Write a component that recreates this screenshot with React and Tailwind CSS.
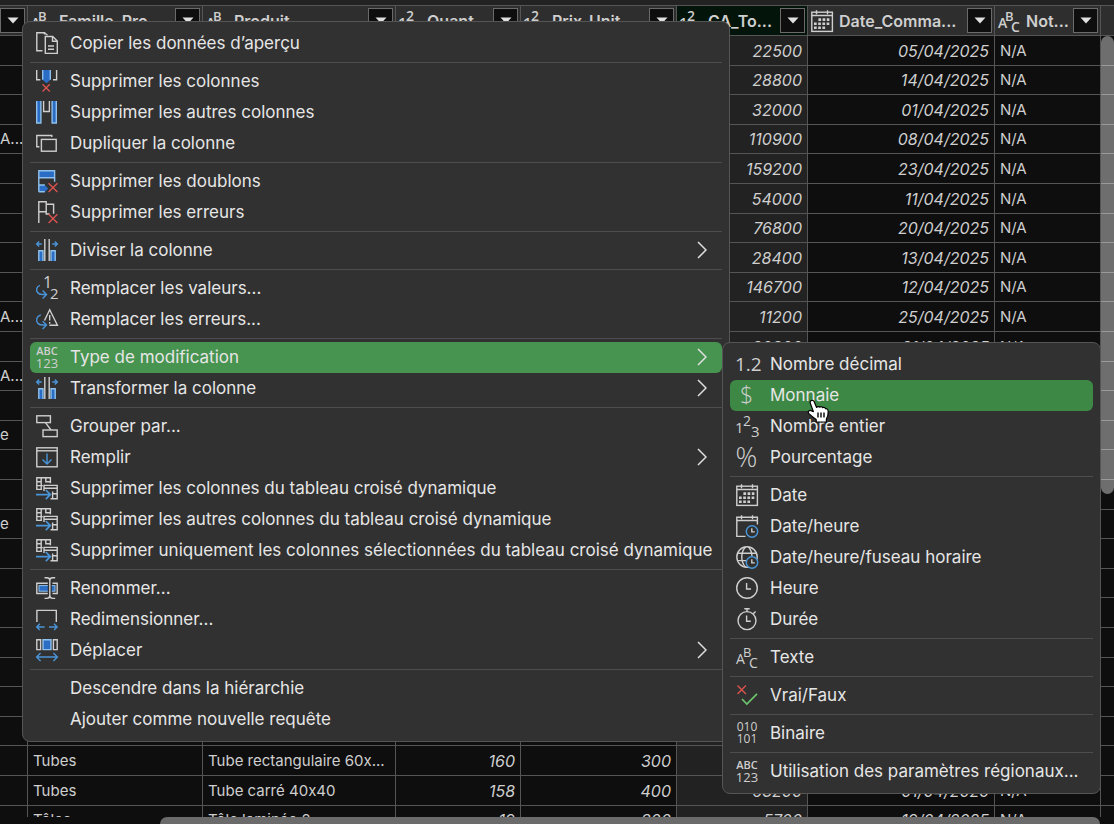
import React from "react";

const COLUMNS = [
  { key: "ref", label: "", width: "w-[28px]" },
  { key: "famille", label: "Famille_Pro...", type: "abc", width: "w-[175px]" },
  { key: "produit", label: "Produit", type: "abc", width: "w-[193px]" },
  { key: "quantite", label: "Quant...", type: "int", width: "w-[125px]", number: true },
  { key: "prix", label: "Prix_Unit...", type: "int", width: "w-[156px]", number: true },
  { key: "total", label: "CA_To...", type: "int", width: "w-[131px]", number: true, selected: true },
  { key: "date", label: "Date_Comma...", type: "date", width: "w-[187px]", number: true },
  { key: "note", label: "Not...", type: "abc", width: "w-[106px]" },
];

const ROWS = [
  { total: "22500", date: "05/04/2025", note: "N/A" },
  { total: "28800", date: "14/04/2025", note: "N/A" },
  { total: "32000", date: "01/04/2025", note: "N/A" },
  { ref: "A...", total: "110900", date: "08/04/2025", note: "N/A" },
  { total: "159200", date: "23/04/2025", note: "N/A" },
  { total: "54000", date: "11/04/2025", note: "N/A" },
  { total: "76800", date: "20/04/2025", note: "N/A" },
  { total: "28400", date: "13/04/2025", note: "N/A" },
  { total: "146700", date: "12/04/2025", note: "N/A" },
  { ref: "A...", total: "11200", date: "25/04/2025", note: "N/A" },
  { total: "20800", date: "21/04/2025", note: "N/A" },
  { ref: "A..." },
  {},
  { ref: "e" },
  {},
  {},
  { ref: "e" },
  {},
  {},
  {},
  {},
  {},
  {},
  {},
  { famille: "Tubes", produit: "Tube rectangulaire 60x...", quantite: "160", prix: "300" },
  { famille: "Tubes", produit: "Tube carré 40x40", quantite: "158", prix: "400", total: "63200", date: "01/04/2025", note: "N/A" },
  { famille: "Tôles", produit: "Tôle laminée 2", quantite: "19", prix: "300", total: "5700", date: "19/04/2025", note: "N/A" },
];

const MENU = [
  [{ label: "Copier les données d’aperçu", icon: "copy" }],
  [
    { label: "Supprimer les colonnes", icon: "removeColumns" },
    { label: "Supprimer les autres colonnes", icon: "removeOthers" },
    { label: "Dupliquer la colonne", icon: "duplicate" },
  ],
  [
    { label: "Supprimer les doublons", icon: "removeDuplicates" },
    { label: "Supprimer les erreurs", icon: "removeErrors" },
  ],
  [{ label: "Diviser la colonne", icon: "split", submenu: true }],
  [
    { label: "Remplacer les valeurs...", icon: "replaceValues" },
    { label: "Remplacer les erreurs...", icon: "replaceErrors" },
  ],
  [
    { label: "Type de modification", icon: "anyType", submenu: true, active: true },
    { label: "Transformer la colonne", icon: "split", submenu: true },
  ],
  [
    { label: "Grouper par...", icon: "group" },
    { label: "Remplir", icon: "fill", submenu: true },
    { label: "Supprimer les colonnes du tableau croisé dynamique", icon: "unpivot" },
    { label: "Supprimer les autres colonnes du tableau croisé dynamique", icon: "unpivot" },
    { label: "Supprimer uniquement les colonnes sélectionnées du tableau croisé dynamique", icon: "unpivot" },
  ],
  [
    { label: "Renommer...", icon: "rename" },
    { label: "Redimensionner...", icon: "resize" },
    { label: "Déplacer", icon: "move", submenu: true },
  ],
  [{ label: "Descendre dans la hiérarchie" }, { label: "Ajouter comme nouvelle requête" }],
];

const TYPE_MENU = [
  [
    { label: "Nombre décimal", icon: "decimal" },
    { label: "Monnaie", icon: "currency", active: true },
    { label: "Nombre entier", icon: "int" },
    { label: "Pourcentage", icon: "percent" },
  ],
  [
    { label: "Date", icon: "date" },
    { label: "Date/heure", icon: "dateTime" },
    { label: "Date/heure/fuseau horaire", icon: "dateTimeZone" },
    { label: "Heure", icon: "time" },
    { label: "Durée", icon: "duration" },
  ],
  [{ label: "Texte", icon: "abc" }],
  [{ label: "Vrai/Faux", icon: "boolean" }],
  [{ label: "Binaire", icon: "binary" }],
  [{ label: "Utilisation des paramètres régionaux...", icon: "anyType" }],
];

const BLUE = "#2b6cc4";
const SKY = "#8fc1ec";
const ARROW = "#4a94d8";
const RED = "#d9534f";

function SmallClock() {
  return (
    <>
      <circle cx="16" cy="16.5" r="5.7" fill="#303030" stroke={ARROW} strokeWidth="1.5" />
      <path d="M15.8 13.3v3.6h3" />
    </>
  );
}

function CalendarFrame() {
  return <path d="M5.5 .3v4M16.5 .3v4M.8 5.5h20.6" />;
}

const ICONS = {
  copy: (
    <>
      <path d="M8.5 2.5V.8H.8v18h5.7M8.5 .8l3 2.4" />
      <path d="M9.3 4.5h7.4l4.6 4.6v12.3h-12zM16.5 4.5v4.8h4.8M12 14h6M12 17.3h6" />
    </>
  ),
  removeColumns: (
    <>
      <path d="M.7 0v9.7h3.6M20.6 0v9.7h-3.6" />
      <path d="M6.5 0h8v9.8l-4 3.4-4-3.4z" fill={BLUE} stroke="none" />
      <path d="M6.7 0v9.8M14.3 0v9.8" stroke={SKY} />
      <path d="M6.5 14.2l7.3 7.3M13.8 14.2l-7.3 7.3" stroke={RED} />
    </>
  ),
  removeOthers: (
    <>
      <path d="M.7 0v22h4.2V0M20.3 0v22h-4.2V0" fill={BLUE} stroke={SKY} />
      <path d="M7.6 0v10.5h5.8V0" />
    </>
  ),
  duplicate: (
    <>
      <path d="M15.8 5V3.5H.8v11.3h2.6" />
      <rect x="5.4" y="7.4" width="14.8" height="11.8" />
    </>
  ),
  removeDuplicates: (
    <>
      <path d="M2.8 .8h15.8v7H2.8z" fill={BLUE} stroke={SKY} />
      <path d="M2.8 15h6l3.4 3.4-3 3.3H2.8z" fill={BLUE} stroke="none" />
      <path d="M2.8 7.8v14M18.6 7.8v4M2.8 15h6M2.8 21.7h6" stroke={SKY} />
      <path d="M12.6 13.2l8.8 8.8M21.4 13.2l-8.8 8.8" stroke={RED} />
    </>
  ),
  removeErrors: (
    <>
      <path d="M2.8 22V.8h7.4v10H2.8M10.2 3.3h7.4v9.5M13.5 13h-3.3v-2" />
      <path d="M12.6 13.2l8.8 8.8M21.4 13.2l-8.8 8.8" stroke={RED} />
    </>
  ),
  split: (
    <>
      <path d="M2.8 22V11.8H7V22M15 22V11.8h4.2V22" fill={BLUE} stroke={SKY} />
      <path d="M8.8 0v22M13.2 0v22" />
      <path d="M5.8 5H.6M3.2 2.4L.6 5l2.6 2.6M16.2 5h5.2M18.8 2.4L21.4 5l-2.6 2.6" stroke={ARROW} />
    </>
  ),
  replaceValues: (
    <>
      <path d="M3.8 8.3C.6 9.6-.3 13 1.6 15.5c1.2 1.7 3 2 4.8 2h3.8M6.6 13.6l3.9 3.9-3.9 3.9" stroke={ARROW} />
      <text x="7" y="11" fontSize="16">1</text>
      <text x="14" y="22" fontSize="15">2</text>
    </>
  ),
  replaceErrors: (
    <>
      <path d="M4.8 6.8C.6 8.2-.3 12 1.6 15c1.2 1.7 3 2 4.8 2h3.8M6.6 13.2l3.9 3.9-3.9 3.9" stroke={ARROW} />
      <path d="M8.5 12.5L13.7 1.8 21.4 17.2h-8M13.7 7v5.6M13.7 14v1.8" />
    </>
  ),
  anyType: (
    <>
      <text x="11" y="9" fontSize="11" fontWeight="600" textAnchor="middle">ABC</text>
      <text x="11" y="22" fontSize="13" textAnchor="middle">123</text>
    </>
  ),
  group: (
    <>
      <rect x=".8" y=".8" width="13.6" height="6.8" />
      <rect x="7" y="15" width="14.2" height="6.6" />
      <path d="M9.5 7.6L15 15" />
    </>
  ),
  fill: (
    <>
      <rect x=".8" y="1.8" width="20.4" height="19" />
      <path d="M.8 4.8h20.4" />
      <path d="M11 7.4v10.4M6.5 13.4l4.5 4.5 4.5-4.5" stroke={ARROW} />
    </>
  ),
  unpivot: (
    <>
      <path d="M6 12.4H.8V.8h13.6v5.4M.8 4.8h5M5.2 .8v11.6M.8 8.6h6M9.8 .8v4h4.6" />
      <path d="M8 14V8.4h13.2v13.4H14.5M8 11.2h13.2M16.6 14.5v7.3M16.6 16.7h4.6" />
      <path d="M0 17.6h14M9.8 13l4.6 4.6-4.6 4.6" stroke={ARROW} strokeWidth="1.7" />
    </>
  ),
  rename: (
    <>
      <path d="M12 6.3H.8v10.2H12M16.5 6.3h4.7v10.2h-4.7" />
      <rect x="3" y="8.6" width="16" height="5.6" fill={BLUE} stroke={SKY} strokeWidth="1" />
      <path d="M13.8 3v17" stroke="#303030" strokeWidth="4" />
      <path d="M8.5 .8h2.3c2 0 3 1 3 2.6v15.2c0 1.8-1 2.8-3 2.8H8.5M19.2 .8h-2.4c-2 0-3 1-3 2.6v15.2c0 1.8 1 2.8 3 2.8h2.4" />
    </>
  ),
  resize: (
    <>
      <path d="M.9 14V2.4h19.4V14" />
      <path d="M8.6 19H.8M3.8 15.8L.7 19l3.1 3.1M13 19h8M18 15.8l3.1 3.2-3.1 3.1" stroke={ARROW} />
    </>
  ),
  move: (
    <>
      <path d="M.8 .8h3.8v9.8H.8zM17.4 .8h3.8v9.8h-3.8z" />
      <path d="M7 .8h8v9.8H7z" fill={BLUE} stroke={SKY} />
      <path d="M.8 18h20.4M4.6 14l-4 4 4 4M17.4 14l4 4-4 4" stroke={ARROW} />
    </>
  ),
  decimal: <text x="-1" y="18" fontSize="19">1.2</text>,
  currency: <text x="4" y="19" fontSize="23" fontWeight="300">$</text>,
  int: (
    <>
      <text x="-1" y="18" fontSize="15">1</text>
      <text x="7" y="11" fontSize="14">2</text>
      <text x="15" y="22" fontSize="15">3</text>
    </>
  ),
  percent: <text x="-.5" y="20.5" fontSize="27" fontWeight="300">%</text>,
  date: (
    <>
      <CalendarFrame />
      <rect x=".8" y="2.2" width="20.6" height="19.2" />
      <path d="M7.4 9.6h11M3 13.7h15.4M3 17.8h11.2" strokeWidth="2.6" strokeDasharray="2.7 1.5" />
    </>
  ),
  dateTime: (
    <>
      <CalendarFrame />
      <path d="M9.5 21.4H.8V2.2h20.6v7.2" />
      <SmallClock />
    </>
  ),
  dateTimeZone: (
    <>
      <circle cx="11" cy="11" r="10.2" />
      <path d="M1.5 7.3h19M1.5 14.6h10M9.5 .9C4.5 6 4.5 16 9.5 21M12.5 .9c2 2.2 3.2 5 3.5 9" />
      <SmallClock />
    </>
  ),
  time: (
    <>
      <circle cx="11" cy="11" r="10.3" />
      <path d="M10.6 6v6h4.4" />
    </>
  ),
  duration: (
    <>
      <circle cx="11" cy="12.6" r="9" />
      <path d="M10.6 7.5v5.8h4.2M8.3 .8h5.4M11 .8v2.8M17.2 5.8l2.4-2.4" />
    </>
  ),
  abc: (
    <>
      <text x="0" y="18" fontSize="14">A</text>
      <text x="7" y="11" fontSize="13">B</text>
      <text x="13" y="22" fontSize="14">C</text>
    </>
  ),
  boolean: (
    <>
      <path d="M1.5 1.5l8.4 8.4M9.9 1.5l-8.4 8.4" stroke={RED} />
      <path d="M6 15l4.8 5L21 9.8" stroke="#6cc46c" strokeWidth="1.7" />
    </>
  ),
  binary: (
    <>
      <text x="11" y="9" fontSize="12" textAnchor="middle">010</text>
      <text x="11" y="21" fontSize="12" textAnchor="middle">101</text>
    </>
  ),
};

function Icon({ name }) {
  return (
    <svg
      viewBox="0 0 22 22"
      fill="none"
      stroke="#cfcfcf"
      strokeWidth="1.4"
      aria-hidden="true"
      className="size-[22px] shrink-0 overflow-visible font-['Open_Sans',sans-serif] [&_text]:fill-[#cfcfcf] [&_text]:stroke-none"
    >
      {ICONS[name]}
    </svg>
  );
}

function FilterButton({ label }) {
  return (
    <button
      type="button"
      aria-label={`Filtrer ${label}`}
      className="flex h-[25px] w-[25px] shrink-0 items-center justify-center border border-[#6a6a6a] bg-[#0e0e0e]"
    >
      <svg viewBox="0 0 12 7" className="h-[7px] w-3 fill-[#e0e0e0]" aria-hidden="true">
        <path d="M.5 .5h11L6 6.5z" />
      </svg>
    </button>
  );
}

function HeaderCell({ column }) {
  const bg = column.selected ? "bg-[#03150a]" : "bg-[#2e2e2e]";

  return (
    <th className={`border-r border-b border-[#555] p-0 text-base leading-5 font-semibold ${bg} ${column.width}`}>
      <div className="flex h-[29px] items-center gap-1.5 pr-0.5 pl-[3px]">
        {column.type && <Icon name={column.type} />}
        <span className="min-w-0 flex-1 text-left whitespace-nowrap">{column.label}</span>
        <FilterButton label={column.label} />
      </div>
    </th>
  );
}

function cellClass(column) {
  if (column.key === "ref") return "text-[15px]";
  if (column.selected) return "bg-[#222] px-[5px] text-right text-base leading-5 italic";
  if (column.number) return "px-[5px] text-right text-base leading-5 italic";
  return "pr-px pl-[5px] text-[15px]";
}

function DataGrid() {
  return (
    <table className="w-full table-fixed border-separate border-spacing-0 border-t border-[#555] bg-[#0e0e0e] leading-5 text-[#cfcfcf]">
      <thead>
        <tr>
          {COLUMNS.map((column) =>
            column.key === "ref" ? (
              <th key={column.key} className="w-[28px] border-r border-b border-[#555] bg-[#2e2e2e] p-0">
                <div className="flex justify-end pr-0.5">
                  <FilterButton label="Référence" />
                </div>
              </th>
            ) : (
              <HeaderCell key={column.key} column={column} />
            )
          )}
          <th className="border-b border-[#555] bg-[#2e2e2e]" />
        </tr>
      </thead>
      <tbody>
        {ROWS.map((row, index) => (
          <tr key={index} className="h-[30px] nth-[5n+2]:h-[29px] nth-[5n+4]:h-[29px]">
            {COLUMNS.map((column) => (
              <td
                key={column.key}
                className={`overflow-hidden border-r border-b border-[#555] py-0 leading-5 whitespace-nowrap ${cellClass(column)}`}
              >
                {row[column.key]}
              </td>
            ))}
            <td className="border-b border-[#555] p-0" />
          </tr>
        ))}
      </tbody>
    </table>
  );
}

function MenuItem({ item, activeClass }) {
  return (
    <button
      type="button"
      role="menuitem"
      aria-haspopup={item.submenu ? "menu" : undefined}
      className={`flex h-[31px] w-full items-center gap-3 rounded-md pr-[15px] pb-0.5 pl-1.5 text-left ${item.active ? activeClass : ""}`}
    >
      {item.icon ? <Icon name={item.icon} /> : <span className="w-[22px] shrink-0" />}
      <span className="flex-1 whitespace-nowrap">{item.label}</span>
      {item.submenu && (
        <svg viewBox="0 0 10 18" className="h-[18px] w-2.5 fill-none stroke-[#e0e0e0] stroke-[1.5]" aria-hidden="true">
          <path d="M1 1l8 8-8 8" />
        </svg>
      )}
    </button>
  );
}

function ContextMenu({ label, groups, activeClass, className }) {
  return (
    <div
      role="menu"
      aria-label={label}
      className={`absolute rounded-lg border border-[#555] bg-[#313131] px-[7px] py-1.5 text-[17px] leading-5 text-[#e6e6e6] ${className}`}
    >
      {groups.map((group, index) => (
        <div key={index}>
          {index > 0 && <hr className="my-[3px] border-[#4d4d4d]" />}
          {group.map((item) => (
            <MenuItem key={item.label} item={item} activeClass={activeClass} />
          ))}
        </div>
      ))}
    </div>
  );
}

function HandCursor() {
  return (
    <svg
      viewBox="0 0 22 24"
      className="pointer-events-none absolute top-[399px] left-[807px] h-6 w-[22px] fill-white stroke-black"
      strokeWidth="1.2"
      strokeLinejoin="round"
      aria-hidden="true"
    >
      <path d="M4.2 1.6c1.1-.6 2.4-.1 2.9 1l2.5 5.8c.8-.9 2.200-1 3-.2 1-.8 2.400-.6 3 .4 1.200-.5 2.500 0 2.900 1.100 1.300-.2 2.500.6 2.600 2.100.2 2.900 0 5.600-1.700 8v3.200H9.200v-2.400c-2.600-1.900-5.200-3.800-7.500-6.200-1.200-1.500.4-3.500 2.300-2.800l2.400 1L3.300 4.200c-.4-1 0-2.100.9-2.600z" />
      <path d="M11 13.500v5M14 13.500v5M17 13.500v5" fill="none" strokeWidth="1.4" />
    </svg>
  );
}

export default function App() {
  return (
    <div className="relative h-screen overflow-hidden bg-[#222] pt-[5px] font-[Inter,sans-serif] [font-feature-settings:'calt'_0]">
      <DataGrid />

      <div className="absolute top-9 right-0 h-[458px] w-[13px] rounded-full bg-white/40" />
      <div className="absolute inset-x-0 bottom-0 h-[7px] bg-[#0e0e0e] pr-3.5 pl-40">
        <div className="h-full rounded-t-lg bg-[#6b6b6b]" />
      </div>

      <ContextMenu
        label="Colonne"
        groups={MENU}
        activeClass="bg-[#479350]"
        className="top-[21px] left-[22px] w-[708px]"
      />
      <ContextMenu
        label="Type de modification"
        groups={TYPE_MENU}
        activeClass="bg-[#3d8845]"
        className="top-[342px] left-[722px] w-[379px]"
      />
      <HandCursor />
    </div>
  );
}
